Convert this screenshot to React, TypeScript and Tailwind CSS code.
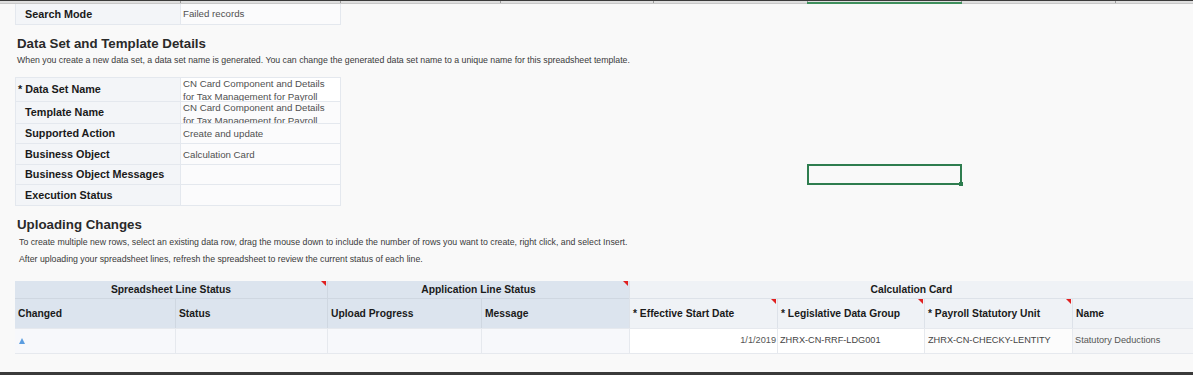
import React from "react";

const font = { fontFamily: '"Liberation Sans", Arial, sans-serif' };

const details = [
  { label: "* Data Set Name", value: "CN Card Component and Details for Tax Management for Payroll", h: "h-[23px]", editable: true },
  { label: "Template Name", value: "CN Card Component and Details for Tax Management for Payroll", h: "h-[22px]" },
  { label: "Supported Action", value: "Create and update", h: "h-[20px]" },
  { label: "Business Object", value: "Calculation Card", h: "h-[21px]" },
  { label: "Business Object Messages", value: "", h: "h-[20px]" },
  { label: "Execution Status", value: "", h: "h-[21px]" },
];

const gridCols = "grid grid-cols-[161px_152px_154px_147px_148px_147px_148px_1fr]";

function RedMark() {
  return (
    <span className="absolute top-0 right-[1px] w-0 h-0 border-t-[5px] border-l-[5px] border-t-[#e02020] border-l-transparent" />
  );
}

export default function App() {
  const sheetCols = [180, 340, 500, 653, 807, 961, 1115];

  return (
    <div className="relative w-[1193px] h-[375px] bg-[#f9f9f9] overflow-hidden flex flex-col" style={font}>
      {/* spreadsheet column header strip */}
      <div className="h-[1px] bg-[#3a3a3a]" />
      <div className="relative h-[3px] bg-[#dedede] border-b border-[#c8c8c8]">
        {sheetCols.map((x) => (
          <span key={x} className="absolute top-0 h-full w-[1px] bg-[#9a9a9a]" style={{ left: x }} />
        ))}
        <span className="absolute left-[807px] w-[155px] bottom-[-1px] h-[2px] bg-[#3f8f5d]" />
      </div>

      {/* Search mode */}
      <div className="ml-[15px] flex w-[326px] h-[21px] border border-t-0 border-[#e4e8ee]">
        <div className="w-[165px] shrink-0 bg-[#f3f5f8] border-r border-[#e4e8ee] pl-[9px] flex items-center text-[10.8px] font-bold text-[#1a1a1a]">
          Search Mode
        </div>
        <div className="flex-1 bg-[#fbfbfc] pl-[2px] flex items-center text-[9.7px] text-[#505050]">Failed records</div>
      </div>

      <h2 className="ml-[17px] mt-[11px] text-[13.3px] leading-[16px] font-bold text-[#2a2a2a]">Data Set and Template Details</h2>
      <p className="ml-[17px] mt-[3px] text-[8.75px] leading-[11px] text-[#3a3a3a]">
        When you create a new data set, a data set name is generated. You can change the generated data set name to a unique name for this spreadsheet template.
      </p>

      {/* Details table */}
      <div className="ml-[15px] mt-[11px] w-[326px] border border-[#e4e8ee] flex flex-col">
        {details.map((d, i) => (
          <div key={d.label} className={`flex ${d.h} ${i > 0 ? "border-t border-[#e4e8ee]" : ""}`}>
            <div
              className={`w-[165px] shrink-0 bg-[#f3f5f8] border-r border-[#e4e8ee] flex items-center text-[10.8px] font-bold text-[#1a1a1a] ${
                d.editable ? "pl-[2px]" : "pl-[9px]"
              }`}
            >
              {d.label}
            </div>
            <div
              className={`flex-1 overflow-hidden pl-[2px] pr-[10px] text-[9.7px] text-[#505050] ${
                d.editable ? "bg-white" : "bg-[#fbfbfc]"
              } ${d.value.length > 30 ? "leading-[12.5px]" : "leading-[11px] flex items-center"}`}
            >
              {d.value}
            </div>
          </div>
        ))}
      </div>

      <h2 className="ml-[17px] mt-[11px] text-[13.3px] leading-[16px] font-bold text-[#2a2a2a]">Uploading Changes</h2>
      <p className="ml-[19px] mt-[4px] text-[8.75px] leading-[11px] text-[#3a3a3a]">
        To create multiple new rows, select an existing data row, drag the mouse down to include the number of rows you want to create, right click, and select Insert.
      </p>
      <p className="ml-[19px] mt-[6px] text-[8.75px] leading-[11px] text-[#3a3a3a]">
        After uploading your spreadsheet lines, refresh the spreadsheet to review the current status of each line.
      </p>

      {/* Upload table */}
      <div className={`ml-[15px] mt-[16px] ${gridCols} text-[10.3px]`}>
        <div className="relative col-span-2 h-[17px] bg-[#dce4ee] border-r border-[#cfd7e1] flex items-center justify-center font-bold text-[#1a1a1a]">
          Spreadsheet Line Status
          <RedMark />
        </div>
        <div className="relative col-span-2 h-[17px] bg-[#dce4ee] flex items-center justify-center font-bold text-[#1a1a1a]">
          Application Line Status
          <RedMark />
        </div>
        <div className="col-span-4 h-[17px] bg-[#eff2f6] border-l border-[#dde2e9] flex items-center justify-center font-bold text-[#1a1a1a]">
          Calculation Card
        </div>

        {["Changed", "Status", "Upload Progress", "Message"].map((t, i) => (
          <div
            key={t}
            className={`h-[30px] bg-[#dce4ee] border-t border-[#cfd7e1] flex items-center pl-[3px] font-bold text-[#1a1a1a] ${
              i < 3 ? "border-r border-[#cfd7e1]" : ""
            }`}
          >
            {t}
          </div>
        ))}
        {["* Effective Start Date", "* Legislative Data Group", "* Payroll Statutory Unit", "Name"].map((t, i) => (
          <div
            key={t}
            className="relative h-[30px] bg-[#eff2f6] border-t border-l border-[#dde2e9] flex items-center pl-[3px] font-bold text-[#1a1a1a]"
          >
            {t}
            {i < 3 && <RedMark />}
          </div>
        ))}

        <div className="h-[26px] bg-[#f7f8fb] border-t border-b border-[#e6e9ee] border-r flex items-center pl-[4px]">
          <span className="w-0 h-0 border-l-[3px] border-r-[3px] border-b-[6px] border-l-transparent border-r-transparent border-b-[#5b9de0]" />
        </div>
        <div className="h-[26px] bg-[#f7f8fb] border-y border-r border-[#e6e9ee]" />
        <div className="h-[26px] bg-[#f7f8fb] border-y border-r border-[#e6e9ee]" />
        <div className="h-[26px] bg-[#f7f8fb] border-y border-[#e6e9ee]" />
        <div className="h-[26px] bg-white border-y border-l border-[#e6e9ee] flex items-center justify-end pr-[1px] text-[9.2px] text-[#555]">
          1/1/2019
        </div>
        <div className="h-[26px] bg-white border-y border-l border-[#e6e9ee] flex items-center pl-[2px] text-[9.2px] text-[#444]">
          ZHRX-CN-RRF-LDG001
        </div>
        <div className="h-[26px] bg-[#fcfcfc] border-y border-l border-[#e6e9ee] flex items-center pl-[3px] text-[9.2px] text-[#444]">
          ZHRX-CN-CHECKY-LENTITY
        </div>
        <div className="h-[26px] bg-[#f4f5f7] border-y border-l border-[#e6e9ee] flex items-center pl-[2px] text-[9.2px] text-[#555]">
          Statutory Deductions
        </div>
      </div>

      <div className="mt-auto h-[3px] bg-[#3a3a3a]" />

      {/* active cell selection */}
      <div className="absolute left-[807px] top-[164px] w-[155px] h-[21px] border-2 border-[#2e7d4f]">
        <span className="absolute right-[-3px] bottom-[-3px] w-[4px] h-[4px] bg-[#2e7d4f]" />
      </div>
    </div>
  );
}
